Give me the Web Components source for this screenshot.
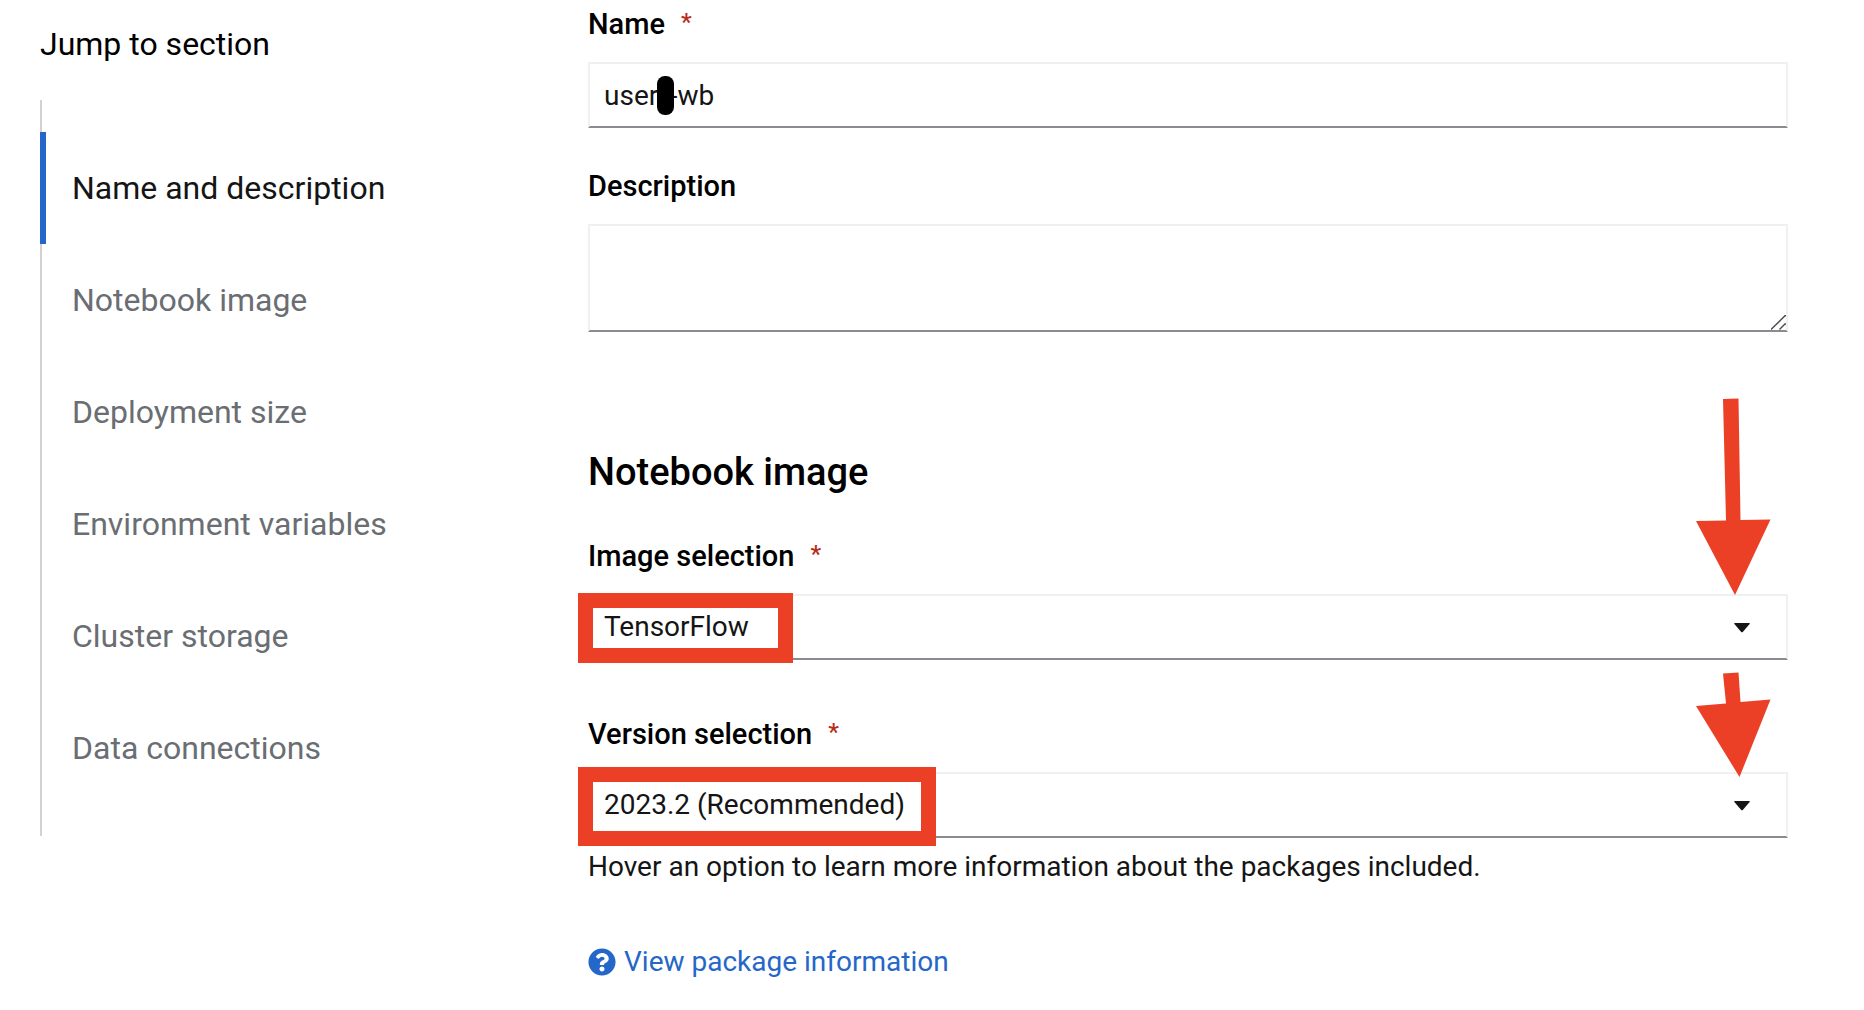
<!DOCTYPE html>
<html lang="en">
<head>
<meta charset="utf-8">
<title>Create workbench</title>
<style>
  :root {
    --text: #151515;
    --muted: #6a6e73;
    --link: #2567c8;
    --rule: #d2d2d2;
    --field-edge: #f0f0f0;
    --field-base: #8a8a90;
    --required: #b92d1c;
    --mark: #eb4026;
  }
  body {
    margin: 0;
    background: #fff;
    color: var(--text);
    font-family: Roboto, "Liberation Sans", sans-serif;
    font-size: 28px;
    line-height: 42px;
  }
</style>
</head>
<body>
<workbench-page>
  <jump-links slot="nav" heading="Jump to section">
    <jump-link href="#name" current>Name and description</jump-link>
    <jump-link href="#image">Notebook image</jump-link>
    <jump-link href="#size">Deployment size</jump-link>
    <jump-link href="#env">Environment variables</jump-link>
    <jump-link href="#storage">Cluster storage</jump-link>
    <jump-link href="#data">Data connections</jump-link>
  </jump-links>

  <form-section id="name">
    <text-field label="Name" required value="user&#8201;&#8201;-wb"></text-field>
    <area-field label="Description"></area-field>
  </form-section>

  <form-section id="image" heading="Notebook image" spacious>
    <select-field label="Image selection" required value="TensorFlow">
      <callout-box slot="mark"></callout-box>
      <callout-arrow slot="mark" size="long"></callout-arrow>
    </select-field>
    <select-field label="Version selection" required value="2023.2 (Recommended)"
                  hint="Hover an option to learn more information about the packages included.">
      <callout-box slot="mark" size="large"></callout-box>
      <callout-arrow slot="mark" size="short"></callout-arrow>
    </select-field>
    <help-link href="#packages">View package information</help-link>
  </form-section>
</workbench-page>

<script>
const shadow = (el, html) => {
  const root = el.attachShadow({ mode: 'open' });
  root.innerHTML = html;
  return root;
};

customElements.define('workbench-page', class extends HTMLElement {
  connectedCallback() {
    shadow(this, `
      <style>
        :host { display: grid; grid-template-columns: 548px minmax(0, 1fr); padding: 0 76px 0 40px; }
        aside { padding-top: 20px; }
        main { display: flex; flex-direction: column; gap: 112px; padding: 6px 0 24px; }
      </style>
      <aside><slot name="nav"></slot></aside>
      <main><slot></slot></main>`);
  }
});

customElements.define('jump-links', class extends HTMLElement {
  connectedCallback() {
    shadow(this, `
      <style>
        :host { display: block; }
        h2 { margin: 0 0 32px; font-size: 32px; line-height: 48px; font-weight: 400; color: #000; }
        nav { display: flex; flex-direction: column; padding: 32px 0; position: relative; width: max-content; }
        nav::before { content: ""; position: absolute; inset: 0 auto 0 0; width: 2px; background: var(--rule); }
      </style>
      <h2>${this.getAttribute('heading')}</h2>
      <nav aria-label="${this.getAttribute('heading')}"><slot></slot></nav>`);
  }
});

customElements.define('jump-link', class extends HTMLElement {
  connectedCallback() {
    shadow(this, `
      <style>
        :host { display: block; position: relative; }
        a { display: block; padding: 32px 32px 32px 26px; border-left: 6px solid transparent;
            font-size: 32px; line-height: 48px; color: var(--muted); text-decoration: none; }
        :host([current]) a { color: var(--text); border-left-color: var(--link); }
      </style>
      <a href="${this.getAttribute('href')}"><slot></slot></a>`);
  }
});

customElements.define('form-section', class extends HTMLElement {
  connectedCallback() {
    const heading = this.getAttribute('heading');
    shadow(this, `
      <style>
        :host { display: block; }
        h2 { margin: 0 0 38px; font-size: 38px; line-height: 56px; font-weight: 500; color: #000; }
        .fields { display: flex; flex-direction: column; gap: 40px; }
        :host([spacious]) .fields { gap: 56px; }
      </style>
      ${heading ? `<h2>${heading}</h2>` : ''}
      <div class="fields"><slot></slot></div>`);
  }
});

const fieldStyles = `
  :host { display: block; }
  .label { display: flex; gap: 16px; margin-bottom: 20px; line-height: 36px; }
  label { font-size: 29px; font-weight: 500; color: #000; }
  .star { color: var(--required); font-size: 24px; line-height: 32px; font-weight: 500; }
  .control { position: relative; }
  input, select, textarea {
    display: block; box-sizing: border-box; width: 100%; margin: 0; padding: 0 14px;
    font: inherit; color: var(--text); background: #fff; outline: none;
    border: 2px solid var(--field-edge); border-bottom-color: var(--field-base); border-radius: 0;
  }
  input, select { height: 66px; }
`;

class FormField extends HTMLElement {
  labelRow() {
    return `<div class="label"><label for="control">${this.getAttribute('label')}</label>${
      this.hasAttribute('required') ? '<span class="star" aria-hidden="true">*</span>' : ''}</div>`;
  }
}

customElements.define('text-field', class extends FormField {
  connectedCallback() {
    shadow(this, `
      <style>
        ${fieldStyles}
        .redaction { position: absolute; left: 69px; top: 14px; width: 17px; height: 39px; border-radius: 8px; background: #000; }
      </style>
      ${this.labelRow()}
      <div class="control">
        <input id="control" type="text" required value="${this.getAttribute('value')}">
        <span class="redaction"></span>
      </div>`);
  }
});

customElements.define('area-field', class extends FormField {
  connectedCallback() {
    shadow(this, `
      <style>
        ${fieldStyles}
        textarea { height: 108px; resize: none; }
        svg { position: absolute; right: 2px; bottom: 2px; pointer-events: none; }
      </style>
      ${this.labelRow()}
      <div class="control">
        <textarea id="control"></textarea>
        <svg width="15" height="15" viewBox="0 0 15 15" fill="none" stroke="#4a4a4a" stroke-width="1.4" aria-hidden="true">
          <path d="M0 14.5 14 .8h1M8.5 14.5 14 9h1"/>
        </svg>
      </div>`);
  }
});

customElements.define('select-field', class extends FormField {
  connectedCallback() {
    const hint = this.getAttribute('hint');
    shadow(this, `
      <style>
        ${fieldStyles}
        select { appearance: none; padding-right: 80px; }
        .caret { position: absolute; right: 38px; top: 28px; pointer-events: none; }
        p { margin: 8px 0 0; }
      </style>
      ${this.labelRow()}
      <div class="control">
        <select id="control" required><option>${this.getAttribute('value')}</option></select>
        <svg class="caret" width="16" height="11" viewBox="0 0 16 11" aria-hidden="true">
          <path fill="#151515" d="M.8 1h14.4q1 .2.4 1L8.8 9.9q-.8.8-1.6 0L.4 2Q-.2 1.2.8 1Z"/>
        </svg>
        <slot name="mark"></slot>
      </div>
      ${hint ? `<p>${hint}</p>` : ''}`);
  }
});

customElements.define('callout-box', class extends HTMLElement {
  connectedCallback() {
    shadow(this, `
      <style>
        :host { position: absolute; left: -10px; top: -1px; box-sizing: border-box; width: 215px; height: 70px;
                border: 15px solid var(--mark); pointer-events: none; }
        :host([size="large"]) { top: -5px; width: 358px; height: 79px; }
      </style>`);
  }
});

customElements.define('callout-arrow', class extends HTMLElement {
  connectedCallback() {
    const long = this.getAttribute('size') === 'long';
    const height = long ? 197 : 105;
    const points = long
      ? '27,1 42.5,.5 44.5,122 74.5,121.5 39,197 0,123 30,122.5'
      : '27,1.5 42.5,.5 44.5,30 74.5,27.5 43.5,105 0,34 30,31.5';
    shadow(this, `
      <style>
        :host { position: absolute; right: 17px; bottom: ${long ? 65 : 61}px; pointer-events: none; }
        svg { display: block; }
      </style>
      <svg width="75" height="${height}" viewBox="0 0 75 ${height}" aria-hidden="true">
        <polygon fill="#eb4026" points="${points}"/>
      </svg>`);
  }
});

customElements.define('help-link', class extends HTMLElement {
  connectedCallback() {
    shadow(this, `
      <style>
        :host { display: block; line-height: 36px; }
        a { display: inline-flex; align-items: center; gap: 8px; color: var(--link); text-decoration: none; }
      </style>
      <a href="${this.getAttribute('href')}">
        <svg width="28" height="28" viewBox="0 0 512 512" aria-hidden="true">
          <path fill="#2567c8" d="M504 256c0 136.997-111.043 248-248 248S8 392.997 8 256C8 119.083 119.043 8 256 8s248 111.083 248 248zM262.655 90c-54.497 0-89.255 22.957-116.549 63.758-3.536 5.286-2.353 12.415 2.715 16.258l34.699 26.31c5.205 3.947 12.621 3.008 16.665-2.122 17.864-22.658 30.113-35.797 57.303-35.797 20.429 0 45.698 13.148 45.698 32.958 0 14.976-12.363 22.667-32.534 33.976C247.128 238.528 216 254.941 216 296v4c0 6.627 5.373 12 12 12h56c6.627 0 12-5.373 12-12v-1.333c0-28.462 83.186-29.647 83.186-106.667 0-58.002-60.165-102-116.531-102zM256 338c-25.365 0-46 20.635-46 46 0 25.364 20.635 46 46 46s46-20.636 46-46c0-25.364-20.635-46-46-46z"/>
        </svg>
        <slot></slot>
      </a>`);
  }
});
</script>
</body>
</html>
